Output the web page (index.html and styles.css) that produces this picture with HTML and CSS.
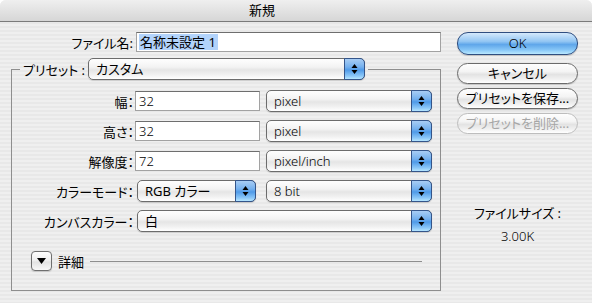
FILE: index.html
```html
<!DOCTYPE html>
<html lang="ja">
<head>
    <meta charset="UTF-8">
    <title>新規</title>
    <link rel="stylesheet" href="styles.css">
</head>
<body>
    <div class="window">
        <div class="titlebar">新規</div>

        <div class="content">
            <div class="form">
                <div class="name-row">
                    <span class="name-label">ファイル名:</span>
                    <div class="textfield name-field"><span class="selected">名称未設定 1</span></div>
                </div>

                <fieldset class="preset-group">
                    <legend class="preset-legend">
                        <span class="legend-label">プリセット :</span>
                        <div class="popup preset-popup">
                            <span class="popup-label ja">カスタム</span>
                            <span class="popup-arrows"><svg width="7" height="12" viewBox="0 0 7 12"><path d="M3.5 1 L6.5 5 L0.5 5 Z M0.5 7 L6.5 7 L3.5 11 Z" fill="#000"/></svg></span>
                        </div>
                    </legend>

                    <div class="fields">
                        <span class="field-label">幅：</span>
                        <div class="textfield">32</div>
                        <div class="popup">
                            <span class="popup-label">pixel</span>
                            <span class="popup-arrows"><svg width="7" height="12" viewBox="0 0 7 12"><path d="M3.5 1 L6.5 5 L0.5 5 Z M0.5 7 L6.5 7 L3.5 11 Z" fill="#000"/></svg></span>
                        </div>

                        <span class="field-label">高さ：</span>
                        <div class="textfield">32</div>
                        <div class="popup">
                            <span class="popup-label">pixel</span>
                            <span class="popup-arrows"><svg width="7" height="12" viewBox="0 0 7 12"><path d="M3.5 1 L6.5 5 L0.5 5 Z M0.5 7 L6.5 7 L3.5 11 Z" fill="#000"/></svg></span>
                        </div>

                        <span class="field-label">解像度：</span>
                        <div class="textfield">72</div>
                        <div class="popup">
                            <span class="popup-label">pixel/inch</span>
                            <span class="popup-arrows"><svg width="7" height="12" viewBox="0 0 7 12"><path d="M3.5 1 L6.5 5 L0.5 5 Z M0.5 7 L6.5 7 L3.5 11 Z" fill="#000"/></svg></span>
                        </div>

                        <span class="field-label">カラーモード：</span>
                        <div class="popup inset-popup">
                            <span class="popup-label ja">RGB カラー</span>
                            <span class="popup-arrows"><svg width="7" height="12" viewBox="0 0 7 12"><path d="M3.5 1 L6.5 5 L0.5 5 Z M0.5 7 L6.5 7 L3.5 11 Z" fill="#000"/></svg></span>
                        </div>
                        <div class="popup">
                            <span class="popup-label">8 bit</span>
                            <span class="popup-arrows"><svg width="7" height="12" viewBox="0 0 7 12"><path d="M3.5 1 L6.5 5 L0.5 5 Z M0.5 7 L6.5 7 L3.5 11 Z" fill="#000"/></svg></span>
                        </div>

                        <span class="field-label">カンバスカラー：</span>
                        <div class="popup inset-popup wide-popup">
                            <span class="popup-label ja">白</span>
                            <span class="popup-arrows"><svg width="7" height="12" viewBox="0 0 7 12"><path d="M3.5 1 L6.5 5 L0.5 5 Z M0.5 7 L6.5 7 L3.5 11 Z" fill="#000"/></svg></span>
                        </div>
                    </div>

                    <div class="details">
                        <span class="disclosure"><svg width="9" height="6" viewBox="0 0 9 6"><path d="M0 0 L9 0 L4.5 6 Z" fill="#000"/></svg></span>
                        <span class="details-label">詳細</span>
                        <span class="details-line"></span>
                    </div>
                </fieldset>
            </div>

            <div class="actions">
                <div class="button default">OK</div>
                <div class="button cancel">キャンセル</div>
                <div class="button">プリセットを保存...</div>
                <div class="button disabled">プリセットを削除...</div>

                <div class="filesize-label">ファイルサイズ :</div>
                <div class="filesize-value">3.00K</div>
            </div>
        </div>
    </div>
</body>
</html>
```

FILE: styles.css
```css
body {
    margin: 0;
    background: #fff;
    font-family: "Noto Sans", "Noto Sans CJK JP", sans-serif;
    font-size: 13px;
    font-feature-settings: "palt";
    color: #000;
}
.window {
    width: 592px;
    height: 303px;
    background: repeating-linear-gradient(#efefef 0 2px, #e8e8e8 2px 4px);
    border-radius: 6px 6px 0 0;
    overflow: hidden;
}
.titlebar {
    height: 21px;
    line-height: 21px;
    padding-right: 68px;
    text-align: center;
    background: linear-gradient(#efefef, #d6d6d6);
    border-bottom: 1px solid #7b7b7b;
}
.content {
    display: flex;
    gap: 16px;
    padding-top: 10px;
}
.form {
    width: 441px;
}
.name-row {
    display: flex;
    align-items: center;
    justify-content: flex-end;
    gap: 3px;
}
.textfield {
    box-sizing: border-box;
    height: 20px;
    line-height: 18px;
    padding-left: 3px;
    font-weight: 300;
    background: #fff;
    border: 1px solid #a2a2a2;
    border-top-color: #6e6e6e;
}
.name-field {
    width: 305px;
    padding-left: 2px;
    font-weight: 400;
}
.selected {
    display: inline-block;
    height: 16px;
    line-height: 16px;
    margin-top: 1px;
    padding: 0 2px 0 1px;
    background: #b2d3fb;
}
.preset-group {
    margin: 6px 0 0 11px;
    padding: 0 8px 19px 0;
    border: 1px solid #8e8e8e;
    min-inline-size: 0;
}
.preset-legend {
    display: flex;
    align-items: center;
    margin-left: 8px;
    padding: 0 3px;
}
.legend-label {
    width: 65px;
}
.preset-popup {
    width: 277px;
}
.popup {
    box-sizing: border-box;
    height: 22px;
    display: flex;
    align-items: center;
    border: 1px solid #6c6c6c;
    border-radius: 5px;
    background: linear-gradient(#fefefe, #f3f3f3 40%, #e5e5e5 55%, #f2f2f2 80%, #fff);
    box-shadow: 0 1px 1px rgba(0, 0, 0, 0.15);
}
.popup-label {
    flex: 1;
    padding-left: 7px;
    line-height: 20px;
    font-weight: 300;
    white-space: nowrap;
}
.popup-label.ja {
    font-weight: 400;
}
.popup-arrows {
    box-sizing: border-box;
    width: 21px;
    height: 22px;
    margin: -1px -1px -1px 0;
    display: flex;
    align-items: center;
    justify-content: center;
    border: 1px solid #34558a;
    border-radius: 0 5px 5px 0;
    background: linear-gradient(#a8cdf4, #74b0ee 40%, #4f9ae8 55%, #8cc8f9 85%, #b6e6ff);
}
.fields {
    display: grid;
    grid-template-columns: 117px 125px 166px;
    grid-auto-rows: 22px;
    column-gap: 6px;
    row-gap: 8px;
    align-items: center;
    padding-top: 10px;
}
.field-label {
    text-align: right;
    margin-right: -5px;
    white-space: nowrap;
}
.inset-popup {
    margin-left: 2px;
    width: 119px;
}
.wide-popup {
    grid-column: 2 / 4;
    width: auto;
}
.details {
    display: flex;
    align-items: center;
    margin: 19px 10px 0 0;
    padding-left: 19px;
}
.disclosure {
    box-sizing: border-box;
    width: 21px;
    height: 20px;
    display: flex;
    align-items: center;
    justify-content: center;
    border: 1px solid #6f6f6f;
    border-radius: 4px;
    background: linear-gradient(#fdfdfd, #eeeeee 50%, #e2e2e2 55%, #f8f8f8);
    box-shadow: 0 1px 1px rgba(0, 0, 0, 0.15);
}
.details-label {
    margin-left: 6px;
}
.details-line {
    flex: 1;
    height: 1px;
    margin-left: 6px;
    background: #8e8e8e;
}
.actions {
    width: 121px;
    display: flex;
    flex-direction: column;
    align-items: stretch;
}
.button {
    box-sizing: border-box;
    height: 21px;
    line-height: 19px;
    text-align: center;
    border: 1px solid #6b6b6b;
    border-radius: 11px;
    background: linear-gradient(#fefefe, #f4f4f4 40%, #e3e3e3 55%, #f1f1f1 80%, #fff);
    box-shadow: 0 1px 1px rgba(0, 0, 0, 0.18);
    margin-top: 4px;
    white-space: nowrap;
}
.button.default {
    height: 23px;
    line-height: 21px;
    margin-top: 0;
    font-weight: 300;
    border-color: #2f4e80;
    background: linear-gradient(#d4e9fc, #93c6f3 40%, #5fa6ea 55%, #86c6f7 80%, #b9e8ff);
}
.button.cancel {
    margin-top: 8px;
}
.button.disabled {
    color: #a6a6a6;
    border-color: #bdbdbd;
    box-shadow: none;
}
.filesize-label {
    margin-top: 71px;
    text-align: center;
    line-height: 16px;
}
.filesize-value {
    margin-top: 7px;
    text-align: center;
    line-height: 16px;
    font-weight: 300;
}
```
